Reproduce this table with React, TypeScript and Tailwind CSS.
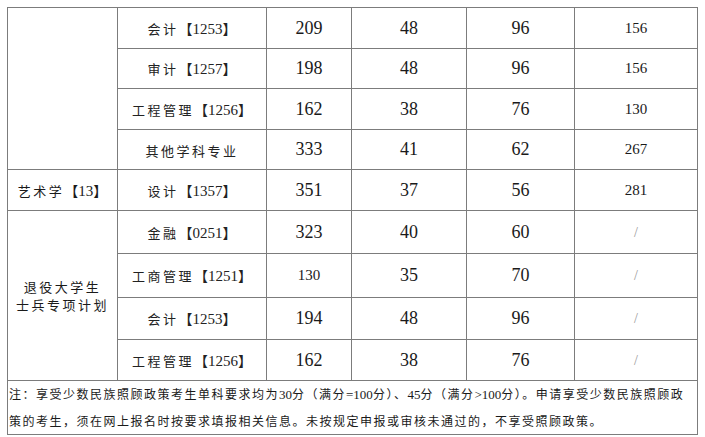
import React from 'react';

const cjk = '"Noto Sans CJK SC", "Noto Sans", sans-serif';
const serif = '"Liberation Serif", "Times New Roman", serif';

type Row = {
  major: [string, string];
  total: string;
  a: string;
  b: string;
  c: string;
  h: string;
  small?: boolean;
};

const rowsTop: Row[] = [
  { major: ['会计', '1253'], total: '209', a: '48', b: '96', c: '156', h: 'h-[41px]' },
  { major: ['审计', '1257'], total: '198', a: '48', b: '96', c: '156', h: 'h-[40px]' },
  { major: ['工程管理', '1256'], total: '162', a: '38', b: '76', c: '130', h: 'h-[41px]' },
  { major: ['其他学科专业', ''], total: '333', a: '41', b: '62', c: '267', h: 'h-[40px]' },
];

const rowsVet: Row[] = [
  { major: ['金融', '0251'], total: '323', a: '40', b: '60', c: '/', h: 'h-[43px]' },
  { major: ['工商管理', '1251'], total: '130', a: '35', b: '70', c: '/', h: 'h-[44px]', small: true },
  { major: ['会计', '1253'], total: '194', a: '48', b: '96', c: '/', h: 'h-[42px]' },
  { major: ['工程管理', '1256'], total: '162', a: '38', b: '76', c: '/', h: 'h-[41px]' },
];

const td = 'border border-[#7c7c7c] text-center align-middle p-0';

function Major({ name, code }: { name: string; code: string }) {
  return (
    <span className="whitespace-nowrap text-[#222]">
      <span className="text-[13px] tracking-[2.5px]" style={{ fontFamily: cjk }}>{name}</span>
      {code && (
        <>
          <span className="text-[14px]" style={{ fontFamily: cjk }}>【</span>
          <span className="text-[15px]" style={{ fontFamily: serif }}>{code}</span>
          <span className="text-[14px]" style={{ fontFamily: cjk }}>】</span>
        </>
      )}
    </span>
  );
}

function Cells({ r }: { r: Row }) {
  return (
    <>
      <td className={td}><Major name={r.major[0]} code={r.major[1]} /></td>
      <td className={`${td} ${r.small ? 'text-[15px]' : 'text-[18px]'}`} style={{ fontFamily: serif }}>{r.total}</td>
      <td className={`${td} text-[18px]`} style={{ fontFamily: serif }}>{r.a}</td>
      <td className={`${td} text-[18px]`} style={{ fontFamily: serif }}>{r.b}</td>
      <td
        className={`${td} ${r.c === '/' ? 'text-[14px] text-[#999]' : 'text-[15px]'}`}
        style={{ fontFamily: serif }}
      >
        {r.c}
      </td>
    </>
  );
}

export default function App() {
  return (
    <div className="w-[705px] h-[437px] bg-white pl-[7px] pt-[7px] text-[#1a1a1a]">
      <table className="w-[690px] border-collapse table-fixed border border-[#555]">
        <colgroup>
          <col className="w-[110px]" />
          <col className="w-[149px]" />
          <col className="w-[85px]" />
          <col className="w-[115px]" />
          <col className="w-[108px]" />
          <col className="w-[123px]" />
        </colgroup>
        <tbody>
          {rowsTop.map((r, i) => (
            <tr key={'t' + i} className={r.h}>
              {i === 0 && <td className={td} rowSpan={4} />}
              <Cells r={r} />
            </tr>
          ))}
          <tr className="h-[41px]">
            <td className={td}>
              <span className="whitespace-nowrap">
                <span className="text-[13px] tracking-[2.5px]" style={{ fontFamily: cjk }}>艺术学</span>
                <span className="text-[14px]" style={{ fontFamily: cjk }}>【</span>
                <span className="text-[15px]" style={{ fontFamily: serif }}>13</span>
                <span className="text-[14px]" style={{ fontFamily: cjk }}>】</span>
              </span>
            </td>
            <Cells r={{ major: ['设计', '1357'], total: '351', a: '37', b: '56', c: '281', h: '' }} />
          </tr>
          {rowsVet.map((r, i) => (
            <tr key={'v' + i} className={r.h}>
              {i === 0 && (
                <td className={td} rowSpan={4}>
                  <div className="text-[13px] leading-[18px] tracking-[2.5px]" style={{ fontFamily: cjk }}>
                    <div>退役大学生</div>
                    <div>士兵专项计划</div>
                  </div>
                </td>
              )}
              <Cells r={r} />
            </tr>
          ))}
          <tr className="h-[52px]">
            <td colSpan={6} className="border border-[#7c7c7c] p-0 pl-[1px] align-middle">
              <div className="text-[12px] leading-[26px] tracking-[1.5px] whitespace-nowrap" style={{ fontFamily: cjk }}>
                <div>
                  注：享受少数民族照顾政策考生单科要求均为<span style={{ fontFamily: serif }} className="text-[13px] tracking-normal">30</span>分（满分<span style={{ fontFamily: serif }} className="text-[13px] tracking-normal">=100</span>分）、<span style={{ fontFamily: serif }} className="text-[13px] tracking-normal">45</span>分（满分<span style={{ fontFamily: serif }} className="text-[13px] tracking-normal">&gt;100</span>分）。申请享受少数民族照顾政
                </div>
                <div>策的考生，须在网上报名时按要求填报相关信息。未按规定申报或审核未通过的，不享受照顾政策。</div>
              </div>
            </td>
          </tr>
        </tbody>
      </table>
    </div>
  );
}
